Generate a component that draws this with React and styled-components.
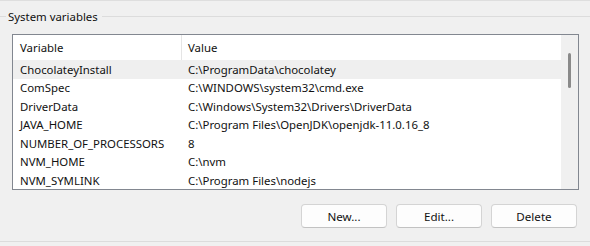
import React from 'react';
import styled, { createGlobalStyle } from 'styled-components';

const GlobalStyle = createGlobalStyle`
  html, body {
    margin: 0;
    padding: 0;
    background: #f0f0f0;
  }
  body {
    font-family: "Noto Sans", "Open Sans", "Liberation Sans", sans-serif;
    font-size: 11.4px;
    color: #111;
  }
`;

const Panel = styled.div`
  width: 590px;
  height: 246px;
  overflow: hidden;
  background: #f0f0f0;
  border-top: 1px solid #dedede;
  box-sizing: border-box;
  display: flex;
  flex-direction: column;
`;

const GroupBox = styled.section`
  display: flex;
  flex-direction: column;
  border-bottom: 1px solid #dcdcdc;
  height: 241px;
  box-sizing: border-box;
`;

const GroupTitle = styled.div`
  display: flex;
  align-items: center;
  gap: 2px;
  height: 14px;
  margin-top: 8px;

  &::before,
  &::after {
    content: '';
    height: 1px;
    background: #dcdcdc;
  }
  &::before {
    width: 6px;
  }
  &::after {
    flex: 1;
    margin-left: 2px;
  }
`;

const ListBox = styled.div`
  display: flex;
  margin: 11px 11px 0 12px;
  height: 156px;
  border: 1px solid #828790;
  box-sizing: border-box;
  background: #fff;
  overflow: hidden;
`;

const Table = styled.div`
  flex: 1;
  display: flex;
  flex-direction: column;
`;

const HeaderRow = styled.div`
  display: flex;
  height: 25px;
  align-items: stretch;
  flex-shrink: 0;
`;

const HeaderCell = styled.div`
  display: flex;
  align-items: center;
  padding-left: ${p => (p.$first ? '7px' : '6px')};
  width: ${p => (p.$first ? '161px' : 'auto')};
  flex: ${p => (p.$first ? 'none' : '1')};
  border-right: ${p => (p.$first ? '1px solid #e5e5e5' : 'none')};
`;

const Row = styled.div`
  display: flex;
  height: 18.5px;
  align-items: center;
  flex-shrink: 0;
  background: ${p => (p.$selected ? '#efefef' : 'transparent')};
`;

const Cell = styled.div`
  white-space: nowrap;
  padding-left: ${p => (p.$first ? '7px' : '6px')};
  width: ${p => (p.$first ? '162px' : 'auto')};
  flex: ${p => (p.$first ? 'none' : '1')};
`;

const ScrollTrack = styled.div`
  width: 17px;
  flex-shrink: 0;
  background: #f0f0f0;
  position: relative;
`;

const ScrollThumb = styled.div`
  position: absolute;
  left: 7px;
  top: 18px;
  width: 3px;
  height: 35px;
  border-radius: 2px;
  background: #8a8a8a;
`;

const ButtonRow = styled.div`
  display: flex;
  justify-content: flex-end;
  gap: 9px;
  margin: 14px 13px 0 0;
`;

const Button = styled.button`
  width: 86px;
  height: 24px;
  font-family: inherit;
  font-size: 11.6px;
  color: #111;
  background: #fdfdfd;
  border: 1px solid #d4d4d4;
  border-bottom-color: #c2c2c2;
  border-radius: 4px;
  padding: 0;
`;

const variables = [
  ['ChocolateyInstall', 'C:\\ProgramData\\chocolatey'],
  ['ComSpec', 'C:\\WINDOWS\\system32\\cmd.exe'],
  ['DriverData', 'C:\\Windows\\System32\\Drivers\\DriverData'],
  ['JAVA_HOME', 'C:\\Program Files\\OpenJDK\\openjdk-11.0.16_8'],
  ['NUMBER_OF_PROCESSORS', '8'],
  ['NVM_HOME', 'C:\\nvm'],
  ['NVM_SYMLINK', 'C:\\Program Files\\nodejs'],
];

export default function App() {
  return (
    <>
      <GlobalStyle />
      <Panel>
        <GroupBox>
          <GroupTitle>System variables</GroupTitle>
          <ListBox>
            <Table>
              <HeaderRow>
                <HeaderCell $first>Variable</HeaderCell>
                <HeaderCell>Value</HeaderCell>
              </HeaderRow>
              {variables.map(([name, value], i) => (
                <Row key={name} $selected={i === 0}>
                  <Cell $first>{name}</Cell>
                  <Cell>{value}</Cell>
                </Row>
              ))}
            </Table>
            <ScrollTrack>
              <ScrollThumb />
            </ScrollTrack>
          </ListBox>
          <ButtonRow>
            <Button>New...</Button>
            <Button>Edit...</Button>
            <Button>Delete</Button>
          </ButtonRow>
        </GroupBox>
      </Panel>
    </>
  );
}
